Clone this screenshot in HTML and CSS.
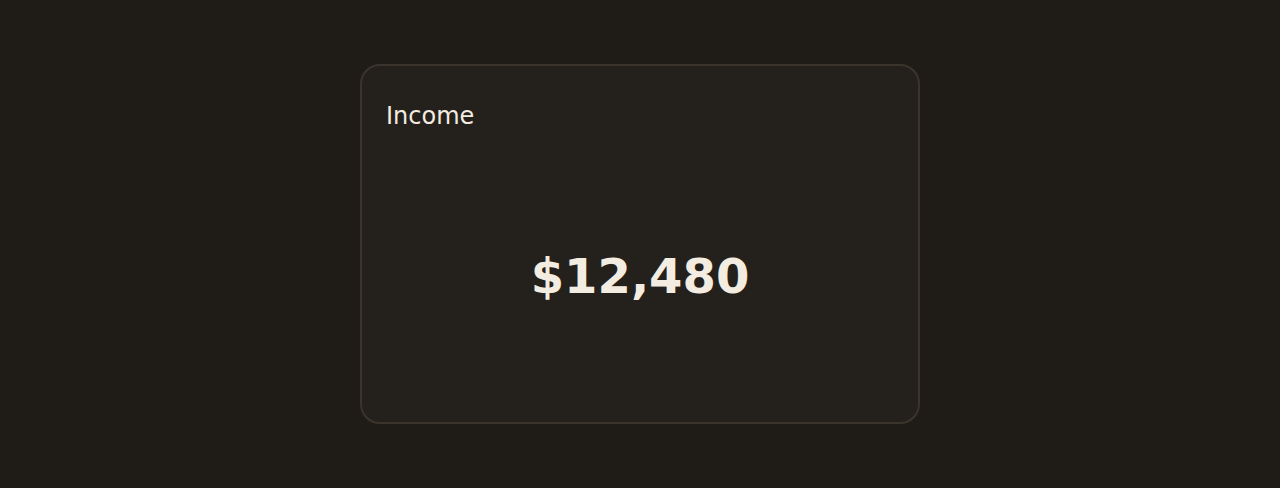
FILE: index.html
```html
<!DOCTYPE html>
<html>
<head>
	<title>Income</title>
	<link rel="stylesheet" href="styles.css">
</head>
<body>

	<main class="stage">
		<div class="card">
			<div class="label">Income</div>
			<div class="value">$12,480</div>
		</div>
	</main>

</body>
</html>
```

FILE: styles.css
```css
body {
	margin: 0;
	width: 100%;
	height: 100vh;
	background-color: #1f1c18;
	font-family: 'DejaVu Sans', sans-serif;
}

.stage {
	height: 100%;
	display: flex;
	align-items: center;
	justify-content: center;
}

.card {
	width: 560px;
	height: 360px;
	display: flex;
	flex-direction: column;
	box-sizing: border-box;
	padding: 36px 24px 24px;
	border-radius: 20px;
	border: 2px solid #3a342c;
	background-color: #24201b;
	color: #f3ece0;
}

.label {
	font-size: 24px;
}

.value {
	margin-top: 118px;
	text-align: center;
	font-size: 48px;
	font-weight: bold;
}
```
